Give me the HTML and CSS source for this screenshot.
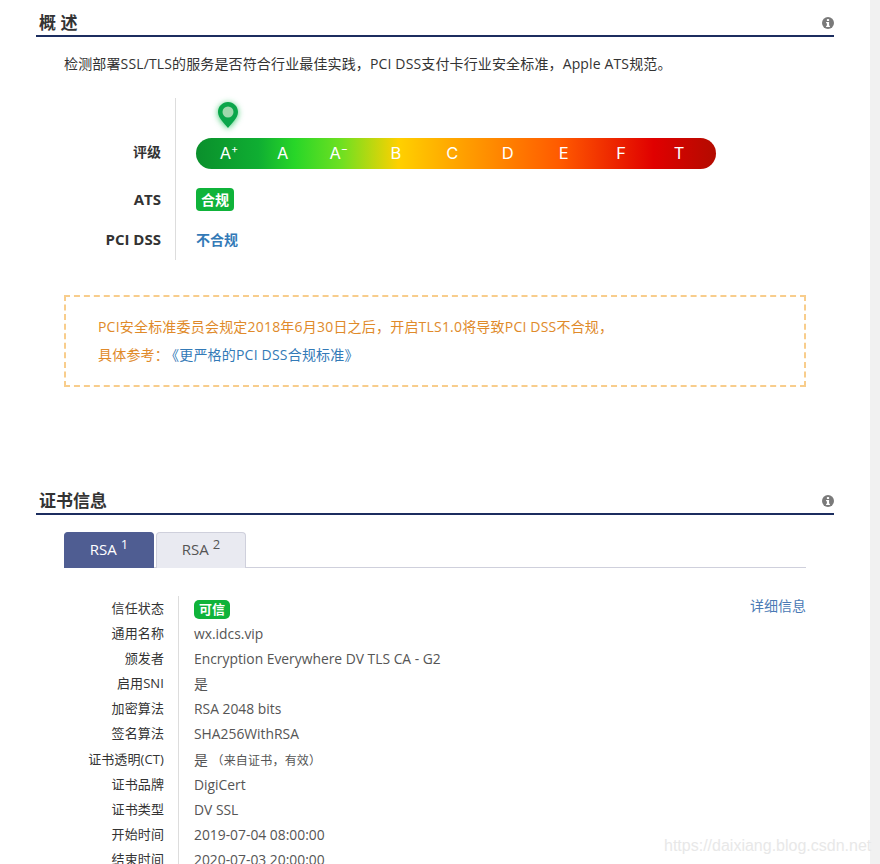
FILE: index.html
```html
<!DOCTYPE html>
<html lang="zh-CN">
<head>
  <meta charset="UTF-8" />
  <title>概述</title>
  <link rel="stylesheet" href="styles.css">
</head>
<body>
  <main class="page">
    <section class="overview">
      <div class="section-head">
        <h2 class="spaced">概 述</h2>
        <svg class="info-icon" viewBox="0 0 12 12"><circle cx="6" cy="6" r="6" fill="#7a7a7a"/><rect x="4.9" y="2.1" width="2.2" height="1.9" fill="#fff"/><path d="M4.1 5h3v3.7h.8v1.2H4.1V8.7h.8V6.2h-.8z" fill="#fff"/></svg>
      </div>
      <p class="intro">检测部署SSL/TLS的服务是否符合行业最佳实践，PCI DSS支付卡行业安全标准，Apple ATS规范。</p>

      <div class="grade-table">
        <div class="grade-row rating-row">
          <div class="grade-label">评级</div>
          <div class="grade-value">
            <svg class="pin" viewBox="0 0 20 26"><path d="M10 0C4.5 0 0 4.4 0 9.9c0 6 6.500 11.600 10 16.100 3.500-4.500 10-10.100 10-16.100C20 4.400 15.500 0 10 0z" fill="#0aa64a"/><circle cx="10" cy="10" r="5.500" fill="#9fd8ac"/></svg>
            <div class="rating-bar">
              <span>A<sup>+</sup></span>
              <span>A</span>
              <span>A<sup>−</sup></span>
              <span>B</span>
              <span>C</span>
              <span>D</span>
              <span>E</span>
              <span>F</span>
              <span>T</span>
            </div>
          </div>
        </div>
        <div class="grade-row">
          <div class="grade-label">ATS</div>
          <div class="grade-value"><span class="badge">合规</span></div>
        </div>
        <div class="grade-row">
          <div class="grade-label">PCI DSS</div>
          <div class="grade-value"><a class="fail-link" href="#">不合规</a></div>
        </div>
      </div>

      <div class="notice">
        <p>PCI安全标准委员会规定2018年6月30日之后，开启TLS1.0将导致PCI DSS不合规，</p>
        <p>具体参考：<a href="#">《更严格的PCI DSS合规标准》</a></p>
      </div>
    </section>

    <section class="cert">
      <div class="section-head">
        <h2>证书信息</h2>
        <svg class="info-icon" viewBox="0 0 12 12"><circle cx="6" cy="6" r="6" fill="#7a7a7a"/><rect x="4.9" y="2.1" width="2.2" height="1.9" fill="#fff"/><path d="M4.1 5h3v3.7h.8v1.2H4.1V8.7h.8V6.2h-.8z" fill="#fff"/></svg>
      </div>

      <div class="tabs">
        <div class="tab active">RSA <sup>1</sup></div>
        <div class="tab">RSA <sup>2</sup></div>
      </div>

      <div class="cert-body">
        <a class="detail-link" href="#">详细信息</a>
        <div class="cert-row"><div class="cert-label">信任状态</div><div class="cert-value"><span class="badge small">可信</span></div></div>
        <div class="cert-row"><div class="cert-label">通用名称</div><div class="cert-value">wx.idcs.vip</div></div>
        <div class="cert-row"><div class="cert-label">颁发者</div><div class="cert-value">Encryption Everywhere DV TLS CA - G2</div></div>
        <div class="cert-row"><div class="cert-label">启用SNI</div><div class="cert-value">是</div></div>
        <div class="cert-row"><div class="cert-label">加密算法</div><div class="cert-value">RSA 2048 bits</div></div>
        <div class="cert-row"><div class="cert-label">签名算法</div><div class="cert-value">SHA256WithRSA</div></div>
        <div class="cert-row"><div class="cert-label">证书透明(CT)</div><div class="cert-value">是 <span class="note">（来自证书，有效）</span></div></div>
        <div class="cert-row"><div class="cert-label">证书品牌</div><div class="cert-value">DigiCert</div></div>
        <div class="cert-row"><div class="cert-label">证书类型</div><div class="cert-value">DV SSL</div></div>
        <div class="cert-row"><div class="cert-label">开始时间</div><div class="cert-value">2019-07-04 08:00:00</div></div>
        <div class="cert-row"><div class="cert-label">结束时间</div><div class="cert-value">2020-07-03 20:00:00</div></div>
      </div>
    </section>
  </main>
  <div class="scroll-gutter"></div>
  <div class="watermark">https://daixiang.blog.csdn.net</div>
</body>
</html>
```

FILE: styles.css
```css
* {
  margin: 0;
  padding: 0;
  box-sizing: border-box;
}

html, body {
  height: 864px;
  overflow: hidden;
}

body {
  font-family: "Open Sans", "Noto Sans CJK SC", sans-serif;
  font-size: 14px;
  color: #333;
  background: #fff;
  display: flex;
  position: relative;
}

a {
  text-decoration: none;
  color: #337ab7;
}

.page {
  width: 870px;
  padding: 0 36px;
}

.scroll-gutter {
  width: 10px;
  background: #f1f1f1;
}

.section-head {
  height: 37px;
  padding: 11px 0 0 3px;
  border-bottom: 2px solid #1c2d5f;
  display: flex;
  justify-content: space-between;
  align-items: flex-start;
}

.section-head h2 {
  font-size: 17px;
  line-height: 24px;
  font-weight: 700;
  color: #333;
}

.section-head .info-icon {
  width: 12px;
  height: 12px;
  margin-top: 6px;
}

.intro {
  margin: 17px 0 0 28px;
  line-height: 20px;
  letter-spacing: 0.14px;
  color: #333;
}

.grade-table {
  margin: 24px 0 0 28px;
}

.grade-row {
  display: flex;
  height: 40px;
}

.rating-row {
  height: 82px;
}

.grade-label {
  width: 112px;
  padding: 0 14px 2px 0;
  border-right: 1px solid #ddd;
  display: flex;
  justify-content: flex-end;
  align-items: center;
  font-size: 15px;
  font-weight: 700;
  color: #333;
}

.rating-row .grade-label {
  align-items: flex-end;
  padding-bottom: 18px;
  font-size: 14px;
  line-height: 20px;
}

.grade-value {
  padding: 0 0 2px 20px;
  display: flex;
  align-items: center;
}

.rating-row .grade-value {
  display: block;
  padding: 4px 0 0 20px;
}

.pin {
  display: block;
  width: 20px;
  height: 26px;
  margin-left: 22px;
  filter: drop-shadow(0 1px 3px rgba(20, 190, 80, 0.8));
}

.rating-bar {
  margin-top: 10px;
  width: 520px;
  height: 31px;
  border-radius: 16px;
  padding: 0 8px 0 6.5px;
  background: linear-gradient(to right, #0a8f2c 0%, #0fae32 12%, #28d628 19%, #6fe021 28%, #ffd000 39%, #ffb000 47%, #ff5a00 70%, #e00000 88%, #b30b00 100%);
  display: grid;
  grid-template-columns: 53px 54.5px 57.5px 57px 55.5px 55.5px 56.5px 58px 58px;
  align-items: center;
  justify-items: center;
  font-family: Inter, sans-serif;
  font-size: 16.5px;
  line-height: 31px;
  color: #fff;
}

.rating-bar sup {
  font-size: 11px;
  line-height: 0;
  vertical-align: 6px;
}

.badge {
  display: inline-block;
  width: 38px;
  height: 23px;
  line-height: 23px;
  border-radius: 4px;
  background: #0fb33a;
  color: #fff;
  font-weight: 700;
  text-align: center;
}

.badge.small {
  width: 36px;
  height: 19px;
  line-height: 19px;
  border-radius: 5px;
  font-size: 13px;
}

.fail-link {
  font-weight: 700;
}

.notice {
  margin: 35px 0 0 28px;
  width: 742px;
  height: 92px;
  padding: 16px 32px;
  border: 2px dashed #f8cd8c;
  color: #e08a2a;
  line-height: 28px;
  letter-spacing: 0.2px;
}

.notice a {
  margin-left: 3px;
}

.cert {
  margin-top: 91px;
}

.tabs {
  margin: 17px 0 0 28px;
  width: 742px;
  height: 36px;
  border-bottom: 1px solid #cfd0dc;
  display: flex;
  gap: 2px;
}

.tab {
  width: 90px;
  height: 36px;
  border: 1px solid #cfd0dc;
  border-bottom: 0;
  border-radius: 4px 4px 0 0;
  background: #e9eaf1;
  color: #555;
  font-size: 15px;
  text-align: center;
  line-height: 33px;
}

.tab.active {
  background: #4f5d92;
  border-color: #4f5d92;
  color: #fff;
}

.tab sup {
  line-height: 0;
  font-size: 13px;
}

.cert-body {
  margin: 28px 0 0 28px;
  width: 742px;
  position: relative;
}

.detail-link {
  position: absolute;
  right: 0;
  top: 0;
  line-height: 20px;
  color: #4a7ab5;
}

.cert-row {
  display: flex;
  height: 25.1px;
  font-size: 13px;
}

.cert-label {
  width: 115px;
  padding: 0 14px 0 0;
  border-right: 1px solid #ddd;
  text-align: right;
  line-height: 25px;
  letter-spacing: 0.1px;
  color: #333;
}

.cert-value {
  padding: 0 0 0 15px;
  font-size: 13.85px;
  line-height: 25px;
  color: #555;
}

.note {
  font-size: 12px;
  letter-spacing: 0.2px;
}

.watermark {
  position: absolute;
  left: 664px;
  top: 836px;
  font-family: "Liberation Sans", sans-serif;
  font-size: 16px;
  line-height: 20px;
  color: #e8e8e8;
}
```
